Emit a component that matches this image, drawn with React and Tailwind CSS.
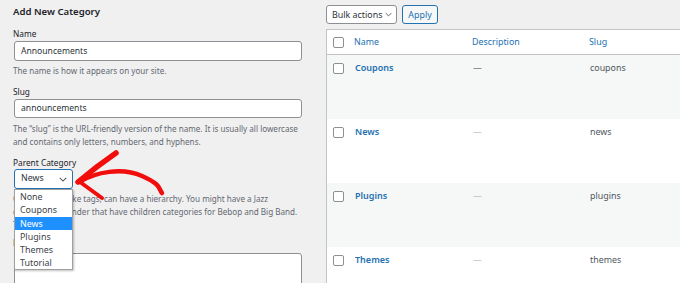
import React from 'react';

const rows = [
  { name: 'Coupons', slug: 'coupons', dark: true },
  { name: 'News', slug: 'news' },
  { name: 'Plugins', slug: 'plugins' },
  { name: 'Themes', slug: 'themes' },
];

const options = ['None', 'Coupons', 'News', 'Plugins', 'Themes', 'Tutorial'];

function Chevron({ className }) {
  return (
    <svg viewBox="0 0 10 6" className={className} fill="none" stroke="#50575e" strokeWidth="1.3">
      <path d="M1 1l4 4 4-4" />
    </svg>
  );
}

function Checkbox() {
  return <div className="w-[11px] h-[11px] rounded-[2px] border border-[#8c8f94] bg-white" />;
}

export default function App() {
  return (
    <div className="relative w-[680px] h-[283px] overflow-hidden bg-[#f0f0f1] flex gap-[24px] font-['Noto_Sans',sans-serif] text-[#3c434a]">
      {/* LEFT FORM */}
      <div className="w-[289px] shrink-0 ml-[13px] relative">
        <h2 className="h-[24px] leading-[24px] text-[9.6px] font-semibold text-[#1d2327]">Add New Category</h2>

        <div className="mt-[3px] leading-[13px] text-[8.3px] text-[#1d2327]">Name</div>
        <div className="mt-[1px] ml-[1px] h-[20px] rounded-[3px] border border-[#8c8f94] bg-white px-[6px] flex items-center text-[8.6px] text-[#2c3338]">
          Announcements
        </div>
        <p className="mt-[3px] leading-[13px] text-[8.1px] text-[#646970]">The name is how it appears on your site.</p>

        <div className="mt-[8px] leading-[13px] text-[8.3px] text-[#1d2327]">Slug</div>
        <div className="mt-[1px] ml-[1px] h-[19px] rounded-[3px] border border-[#8c8f94] bg-white px-[6px] flex items-center text-[8.6px] text-[#2c3338]">
          announcements
        </div>
        <p className="mt-[4px] leading-[13px] text-[8.1px] text-[#646970] whitespace-nowrap">
          The “slug” is the URL-friendly version of the name. It is usually all lowercase
          <br />
          and contains only letters, numbers, and hyphens.
        </p>

        <div className="mt-[8px] leading-[13px] text-[8.3px] text-[#1d2327]">Parent Category</div>
        <div className="ml-[1px] w-[59px] h-[20px] rounded-[3px] border border-[#2271b1] bg-white pl-[6px] pr-[5px] flex items-center justify-between text-[8.8px] text-[#2c3338]">
          News
          <Chevron className="w-[8px] h-[5px]" />
        </div>
        <p className="mt-[3px] leading-[13px] text-[8.1px] text-[#646970] whitespace-nowrap">
          Categories, unlike tags, can have a hierarchy. You might have a Jazz
          <br />
          category, and under that have children categories for Bebop and Big Band.
          <br />
          Totally optional.
        </p>

        <div className="mt-[5px] leading-[13px] text-[8.3px] text-[#1d2327]">Description</div>
        <div className="mt-[4px] ml-[1px] w-[288px] h-[60px] rounded-[3px] border border-[#8c8f94] bg-white" />

        {/* OPEN DROPDOWN */}
        <div className="absolute left-[1px] top-[189px] w-[59px] h-[81px] bg-white border border-[#a0a0a0] shadow-[1px_1px_2px_rgba(0,0,0,0.25)] text-[8.9px] text-[#3c434a]">
          {options.map(o => (
            <div
              key={o}
              className={
                o === 'News'
                  ? 'h-[13.3px] leading-[13.3px] px-[5px] bg-[#1e90ff] text-white'
                  : 'h-[13.3px] leading-[13.3px] px-[5px]'
              }
            >
              {o}
            </div>
          ))}
        </div>
      </div>

      {/* RIGHT TABLE */}
      <div className="flex-1 pt-[5px] min-w-0">
        <div className="flex gap-[5px]">
          <div className="w-[71px] h-[19px] rounded-[3px] border border-[#8c8f94] bg-white pl-[5px] pr-[4px] flex items-center justify-between text-[8.9px] text-[#2c3338]">
            Bulk actions
            <Chevron className="w-[7px] h-[5px]" />
          </div>
          <div className="w-[36px] h-[19px] rounded-[3px] border border-[#2271b1] bg-[#f6f7f7] flex items-center justify-center text-[8.9px] text-[#2271b1]">
            Apply
          </div>
        </div>

        <div className="mt-[5px] w-[420px] border border-[#c3c4c7] bg-white">
          <div className="h-[25px] border-b border-[#c3c4c7] grid grid-cols-[27px_118px_117px_1fr] items-center text-[8.9px] text-[#2271b1]">
            <div className="pl-[6px]"><Checkbox /></div>
            <div>Name</div>
            <div>Description</div>
            <div>Slug</div>
          </div>
          {rows.map((r, i) => (
            <div
              key={r.name}
              className={
                i % 2 === 0
                  ? 'h-[64px] bg-[#f6f7f7] grid grid-cols-[27px_118px_117px_1fr] items-start text-[8.9px]'
                  : 'h-[64px] bg-white grid grid-cols-[27px_118px_117px_1fr] items-start text-[8.9px]'
              }
            >
              <div className="pl-[6px] pt-[8px]"><Checkbox /></div>
              <div className="pt-[6px] leading-[13px] pl-[1px] font-semibold text-[9px] text-[#2271b1]">{r.name}</div>
              <div className={r.dark ? 'pt-[6px] leading-[13px] pl-[1px] text-[#3c434a]' : 'pt-[6px] leading-[13px] pl-[1px] text-[#a7aaad]'}>—</div>
              <div className="pt-[6px] leading-[13px] pl-[1px] text-[#50575e]">{r.slug}</div>
            </div>
          ))}
        </div>
      </div>

      {/* RED ARROW */}
      <svg className="absolute left-0 top-0 w-[680px] h-[283px] pointer-events-none" viewBox="0 0 680 283" fill="none" stroke="#f20d0d" strokeLinecap="round" strokeLinejoin="round">
        <path d="M79 182 C 96 172, 122 167, 142 176 S 158 188, 162 193" strokeWidth="4.5" />
        <path d="M78 182 Q 97 166, 116 153" strokeWidth="5.5" />
        <path d="M80 182 Q 91 190, 102 198" strokeWidth="4" />
      </svg>
    </div>
  );
}
